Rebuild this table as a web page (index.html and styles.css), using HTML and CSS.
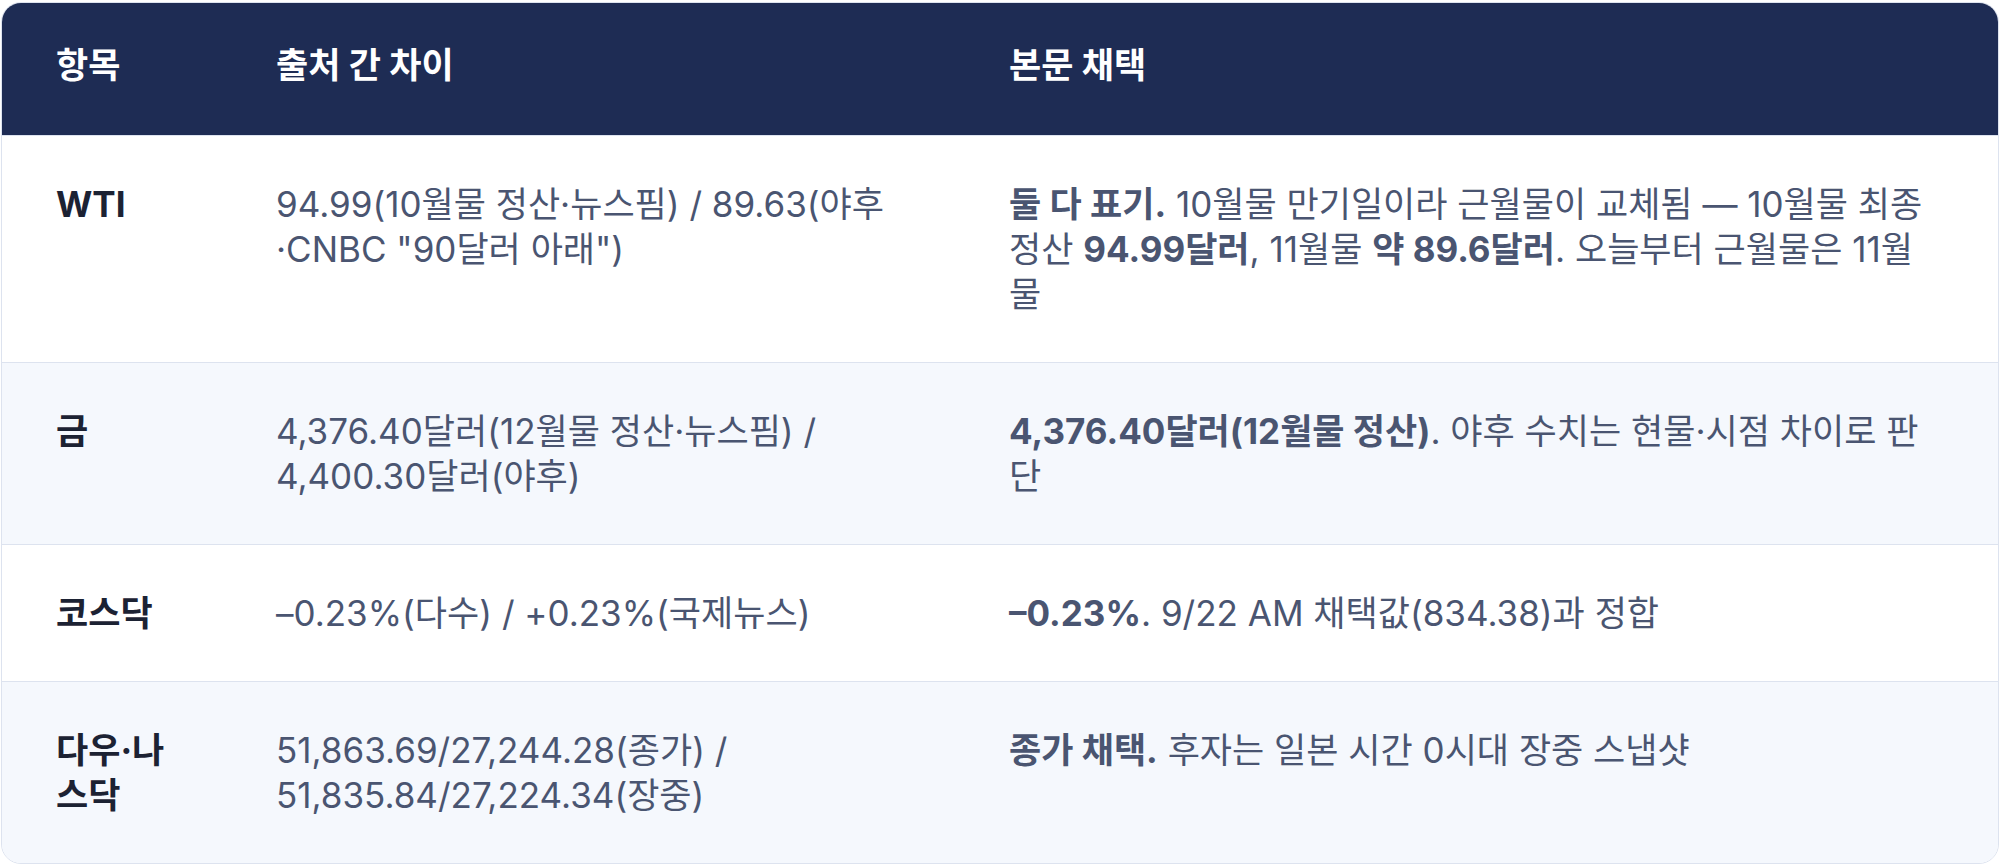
FILE: index.html
```html
<!DOCTYPE html>
<html lang="ko">
<head>
<meta charset="utf-8">
<link rel="stylesheet" href="styles.css">
</head>
<body>
<div class="table">
  <div class="row head">
    <div class="cell">항목</div>
    <div class="cell">출처 간 차이</div>
    <div class="cell">본문 채택</div>
  </div>
  <div class="row">
    <div class="cell key">WTI</div>
    <div class="cell">94.99(10월물 정산·뉴스핌) / 89.63(야후·CNBC "90달러 아래")</div>
    <div class="cell"><b>둘 다 표기.</b> 10월물 만기일이라 근월물이 교체됨 — 10월물 최종 정산 <b>94.99달러</b>, 11월물 <b>약 89.6달러</b>. 오늘부터 근월물은 11월물</div>
  </div>
  <div class="row alt">
    <div class="cell key">금</div>
    <div class="cell">4,376.40달러(12월물 정산·뉴스핌) / 4,400.30달러(야후)</div>
    <div class="cell"><b>4,376.40달러(12월물 정산)</b>. 야후 수치는 현물·시점 차이로 판단</div>
  </div>
  <div class="row">
    <div class="cell key">코스닥</div>
    <div class="cell">–0.23%(다수) / +0.23%(국제뉴스)</div>
    <div class="cell"><b>–0.23%</b>. 9/22 AM 채택값(834.38)과 정합</div>
  </div>
  <div class="row alt last">
    <div class="cell key">다우·나스닥</div>
    <div class="cell">51,863.69/27,244.28(종가) / 51,835.84/27,224.34(장중)</div>
    <div class="cell"><b>종가 채택.</b> 후자는 일본 시간 0시대 장중 스냅샷</div>
  </div>
</div>
</body>
</html>
```

FILE: styles.css
```css
* { box-sizing: border-box; }
html, body { margin: 0; padding: 0; background: #ffffff; }
body {
  font-family: Inter, "Noto Sans CJK KR", sans-serif;
  font-size: 35px;
  line-height: 45px;
  color: #4a5571;
  padding: 2px 1px 0 1px;
}
.table {
  width: 1998px;
  border: 1px solid #dde3ef;
  border-radius: 20px;
  overflow: hidden;
}
.row {
  display: grid;
  grid-template-columns: 220px 733px 1fr;
  border-top: 1px solid #dde3ef;
  background: #ffffff;
}
.row.alt { background: #f5f8fd; }
.row.head {
  background: #1e2c54;
  color: #ffffff;
  font-weight: 700;
  border-top: none;
}
.cell {
  padding: 46px 54px 45px 54px;
}
.head .cell { padding: 40px 54px 47px 54px; }
.key { font-weight: 700; color: #1c2233; }
b { font-weight: 700; }
```
